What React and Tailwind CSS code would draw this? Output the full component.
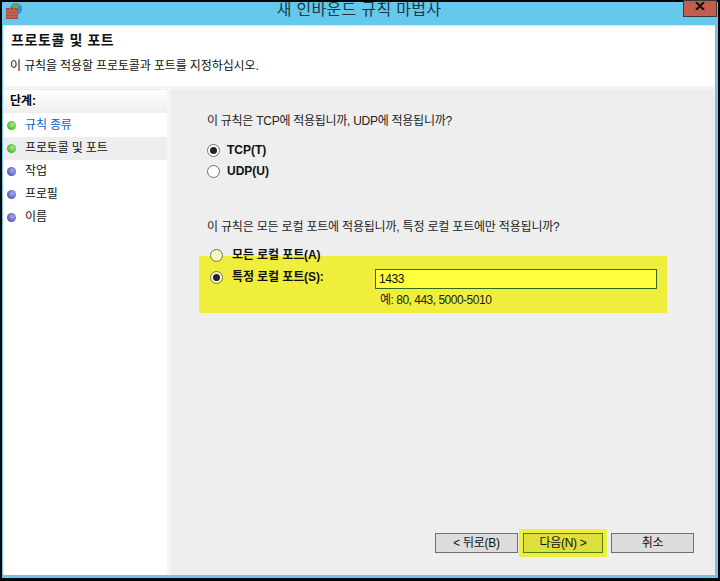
function Dot({ green }) {
  return (
    <span
      className={`block w-[9px] h-[9px] rounded-full shrink-0 ${green ? "bg-[radial-gradient(circle_at_60%_40%,#a8ec90,#4cb82e_70%)]" : "bg-[radial-gradient(circle_at_60%_40%,#a8aef0,#5558b8_70%)]"}`}
    />
  );
}

function Radio({ on, tint }) {
  return (
    <span className={`w-[13px] h-[13px] rounded-full border border-[#707070] flex items-center justify-center shrink-0 ${tint ? "bg-[#f8f8c0]" : "bg-white"}`}>
      {on && <span className="w-[7px] h-[7px] rounded-full bg-[#222]" />}
    </span>
  );
}

function Btn({ children, active }) {
  return (
    <div className={`h-[20px] border flex items-center justify-center text-[12px] leading-none tracking-[-0.3px] text-[#111] ${active ? "w-[80px] border-[#4a8010] bg-[#dede3c]" : "w-[83px] border-[#6f6f6f] bg-[#dddddd]"}`}>
      {children}
    </div>
  );
}

function Step({ label, green, link, active }) {
  return (
    <div className={`h-[23px] flex items-center gap-[9px] pl-[4px] text-[12px] tracking-[-0.15px] ${active ? "bg-[#eeeeee]" : ""} ${link ? "text-[#0b62c4]" : "text-[#111]"}`}>
      <Dot green={green} />
      <span className="-mt-[1px]">{label}</span>
    </div>
  );
}

export default function App() {
  return (
    <div
      className="w-[720px] h-[581px] bg-black pt-[2px] pl-[2px] pr-[2px] pb-[3px] overflow-hidden"
      style={{ fontFamily: '"Liberation Sans","Noto Sans CJK KR",sans-serif' }}
    >
      <div className="w-full h-full bg-[#66c8ea] flex flex-col pl-[1px] pr-[3px] pb-[3px]">
        <div className="h-[23px] shrink-0 relative flex justify-center">
          <svg className="absolute left-[3px] top-[1px]" width="18" height="16" viewBox="0 0 18 16">
            <circle cx="10" cy="6" r="6" fill="#3f86d8" />
            <path d="M6 3 C8 0 12 0 13 2 L11 6 L7 6Z" fill="#53b848" />
            <rect x="0" y="5" width="12" height="11" fill="#a8483c" />
            <path d="M0 8h12M0 11h12M0 14h12M4 5v3M8 5v3M2 8v3M6 8v3M10 8v3M4 11v3M8 11v3" stroke="#c87868" strokeWidth="1" />
          </svg>
          <span className="text-[16px] leading-[16px] pt-[0px] text-[#1a3a4a] tracking-[0.3px]">새 인바운드 규칙 마법사</span>
          <div className="absolute right-[-2px] -top-[2px] w-[34px] h-[17px] bg-[#c45c50] border border-[#3a3a3a] flex justify-center pt-[1px]">
            <svg width="10" height="8" viewBox="0 0 10 8"><path d="M1 0L9 8M9 0L1 8" stroke="#111" strokeWidth="2" /></svg>
          </div>
        </div>

        <div className="flex-1 flex flex-col bg-[#f6f6f6] border-t border-[#d8eef6]">
          <div className="h-[60px] shrink-0 bg-white px-[7px] pt-[5px] text-[#111]">
            <div className="text-[14px] font-bold leading-[18px] tracking-[0.6px] pl-[1px]">프로토콜 및 포트</div>
            <div className="text-[12px] leading-[16px] mt-[9px] tracking-[-0.12px]">이 규칙을 적용할 프로토콜과 포트를 지정하십시오.</div>
          </div>

          <div className="flex-1 flex pt-[3px]">
            <div className="w-[164px] shrink-0 bg-white border-t border-[#eeeeee]">
              <div className="h-[23px] bg-gradient-to-b from-white to-[#eeeeee] flex items-center pl-[7px] text-[12px] font-bold text-black"><span className="-mt-[2px]">단계:</span></div>
              <div className="pt-[1px]">
                <Step label="규칙 종류" green link />
                <Step label="프로토콜 및 포트" green active />
                <Step label="작업" />
                <Step label="프로필" />
                <Step label="이름" />
              </div>
            </div>

            <div className="flex-1 ml-[3px] bg-[#eeeeee] flex flex-col relative">
              <div className="pl-[37px] pt-[23px] text-[12px] leading-[18px] text-[#222] tracking-[-0.27px]">이 규칙은 TCP에 적용됩니까, UDP에 적용됩니까?</div>
              <div className="pl-[37px] pt-[10px] flex items-center gap-[7px] text-[12px] font-bold leading-[21px] text-[#111]"><Radio on /><span>TCP(T)</span></div>
              <div className="pl-[37px] flex items-center gap-[7px] text-[12px] font-bold leading-[21px] text-[#111]"><Radio /><span>UDP(U)</span></div>

              <div className="pl-[37px] pt-[36px] text-[12px] leading-[18px] text-[#222] tracking-[-0.19px]">이 규칙은 모든 로컬 포트에 적용됩니까, 특정 로컬 포트에만 적용됩니까?</div>

              <div className="pl-[40px] pt-[9px] flex items-center gap-[9px] text-[12px] font-bold leading-[20px] text-[#111] relative z-10 tracking-[-0.1px]"><Radio tint /><span>모든 로컬 포트(A)</span></div>
              <div className="-mt-[9px] ml-[29px] w-[468px] h-[57px] bg-[#f0ee3c] pl-[11px] pt-[13px] flex items-start">
                <div className="flex items-center gap-[9px] w-[165px] text-[12px] font-bold leading-[14px] text-[#111] pt-[1px] tracking-[-0.1px]"><Radio on tint /><span>특정 로컬 포트(S):</span></div>
                <div>
                  <div className="w-[282px] h-[20px] border border-[#2f6a1a] bg-[#ffff3c] flex items-center pl-[3px] text-[12px] text-[#111] tracking-[-0.4px]">1433</div>
                  <div className="pl-[5px] pt-[3px] text-[12px] leading-[16px] text-[#222] tracking-[-0.5px]">예: 80, 443, 5000-5010</div>
                </div>
              </div>

              <div className="flex-1" />
              <div className="flex items-center pb-[18px] pl-[265px]">
                <Btn>&lt; 뒤로(B)</Btn>
                <div className="ml-[1px] bg-[#f0ee3c] p-[4px]"><Btn active>다음(N) &gt;</Btn></div>
                <div className="ml-[4px]"><Btn>취소</Btn></div>
              </div>
            </div>
          </div>
        </div>
      </div>
    </div>
  );
}
